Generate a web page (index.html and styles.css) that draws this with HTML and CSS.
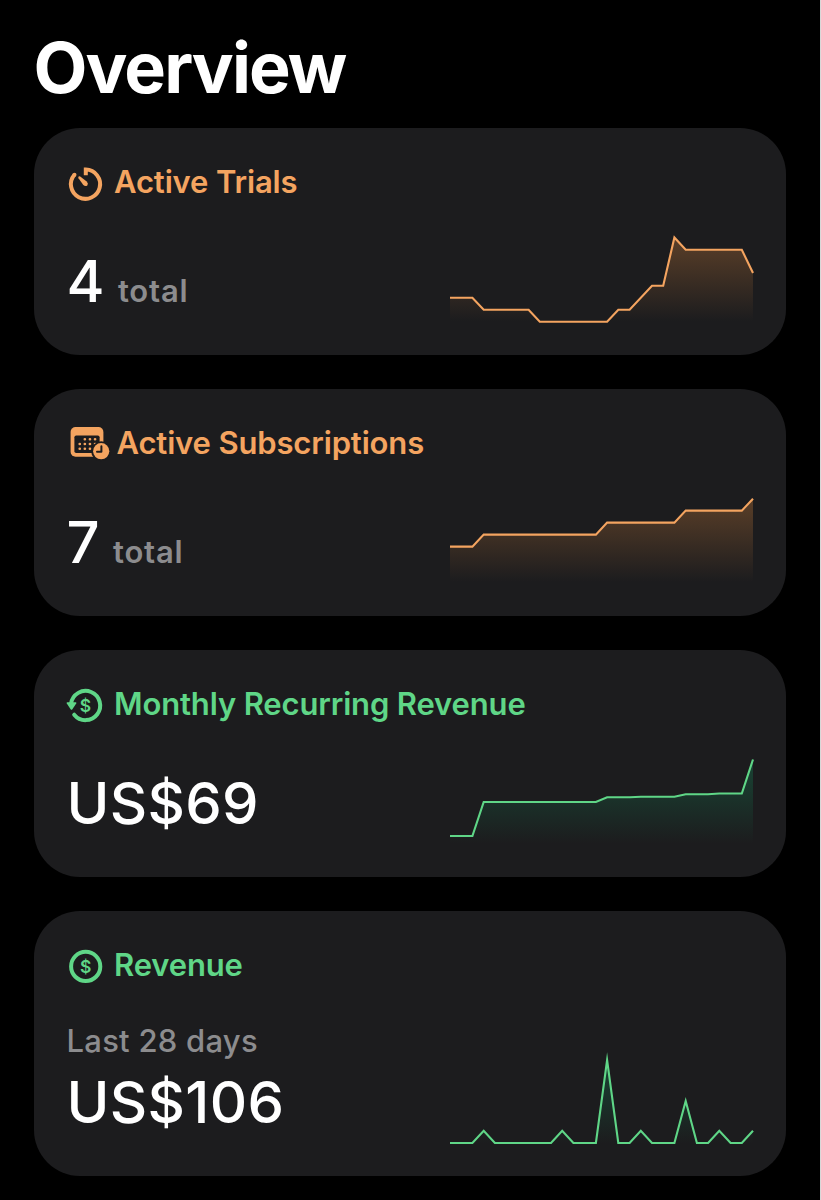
FILE: index.html
```
<!DOCTYPE html>
<html lang="en">

<head>
    <meta charset="UTF-8" />
    <title>Overview</title>
    <link rel="stylesheet" href="styles.css">
</head>

<body>

    <main class="overview">
        <h1>Overview</h1>

        <section class="card orange">
            <h2 class="card-title">
                <svg class="icon" viewBox="0 0 42 36">
                    <path class="ring" d="M18.8 9.2V3.6A14.6 14.6 0 1 1 7.4 8.7" stroke-linecap="butt" />
                    <circle class="fill" cx="7.5" cy="8.7" r="2" />
                    <path class="fill" d="M11.6 10.6Q12.3 10 13.2 10.6L19.7 15.6Q21.8 17.6 20.3 19.4Q18.3 21 16.3 19L11.5 12.2Q11 11.3 11.6 10.6Z" />
                </svg>
                <span>Active Trials</span>
            </h2>
            <div class="card-body">
                <p class="value">4<small>total</small></p>
                <svg class="chart" viewBox="0 0 303 92">
                    <linearGradient id="fade1" gradientUnits="userSpaceOnUse" x1="0" y1="3" x2="0" y2="87">
                        <stop class="fade-top" offset="0" />
                        <stop class="fade-end" offset="1" />
                    </linearGradient>
                    <path fill="url(#fade1)" d="M0 87V63.7H22.4L33.7 75.7H78.6L89.8 87.8H157.1L168.3 75.7H179.6L202 51.8H213.2L224.4 3.5L235.7 15.8H291.8L303 39V87Z" />
                    <polyline class="line" points="0,63.7 22.4,63.7 33.7,75.7 78.6,75.7 89.8,87.8 157.1,87.8 168.3,75.7 179.6,75.7 202,51.8 213.2,51.8 224.4,3.5 235.7,15.8 291.8,15.8 303,39" />
                </svg>
            </div>
        </section>

        <section class="card orange">
            <h2 class="card-title">
                <svg class="icon icon-wide" viewBox="0 0 42 36">
                    <rect class="fill" x="3.6" y="0" width="32.8" height="29.8" rx="5" />
                    <rect class="hole" x="7.4" y="8.4" width="25.2" height="17.6" rx="1.8" />
                    <path class="dots" d="M17.8 12.2h.1M22.9 12.2h.1M28 12.2h.1M12.7 17h.1M17.8 17h.1M22.9 17h.1M28 17h.1M12.7 21.8h.1M17.8 21.8h.1M22.9 21.8h.1" />
                    <circle class="hole" cx="34.2" cy="24.2" r="10" />
                    <circle class="fill" cx="34.2" cy="24.2" r="8.1" />
                    <path class="hand" d="M34.4 19.3V24.8H30" />
                </svg>
                <span>Active Subscriptions</span>
            </h2>
            <div class="card-body">
                <p class="value">7<small>total</small></p>
                <svg class="chart" viewBox="0 0 303 92">
                    <linearGradient id="fade2" gradientUnits="userSpaceOnUse" x1="0" y1="3" x2="0" y2="87">
                        <stop class="fade-top" offset="0" />
                        <stop class="fade-end" offset="1" />
                    </linearGradient>
                    <path fill="url(#fade2)" d="M0 87V51.6H22.4L33.7 39.6H145.9L157.1 27.6H224.4L235.7 15.6H291.8L303 3.7V87Z" />
                    <polyline class="line" points="0,51.6 22.4,51.6 33.7,39.6 145.9,39.6 157.1,27.6 224.4,27.6 235.7,15.6 291.8,15.6 303,3.7" />
                </svg>
            </div>
        </section>

        <section class="card green">
            <h2 class="card-title">
                <svg class="icon" viewBox="0 0 42 36">
                    <path class="ring" d="M4.1 15.5A14.6 14.6 0 1 1 7.2 26.7" stroke-linecap="round" />
                    <path class="fill" d="M.2 14.2H8.8Q9.9 14.4 9.2 15.6L5.4 21.2Q4.5 22.2 3.6 21.2L-.2 15.6Q-.9 14.4 .2 14.2Z" />
                    <text class="dollar" x="18.5" y="23.8">$</text>
                </svg>
                <span>Monthly Recurring Revenue</span>
            </h2>
            <div class="card-body">
                <p class="value">US$69</p>
                <svg class="chart" viewBox="0 0 303 92">
                    <linearGradient id="fade3" gradientUnits="userSpaceOnUse" x1="0" y1="3" x2="0" y2="87">
                        <stop class="fade-top" offset="0" />
                        <stop class="fade-end" offset="1" />
                    </linearGradient>
                    <path fill="url(#fade3)" d="M0 87V80H22.4L33.7 46H145.9L157.1 41.2H180L190.8 40.8H224.4L235.7 38.2H258L269.3 37.5H291.8L303 3.5V87Z" />
                    <polyline class="line" points="0,80 22.4,80 33.7,46 145.9,46 157.1,41.2 180,41.2 190.8,40.8 224.4,40.8 235.7,38.2 258,38.2 269.3,37.5 291.8,37.5 303,3.5" />
                </svg>
            </div>
        </section>

        <section class="card card-tall green">
            <h2 class="card-title">
                <svg class="icon" viewBox="0 0 42 36">
                    <circle class="ring" cx="18.7" cy="17.4" r="14.6" />
                    <text class="dollar" x="18.7" y="23.7">$</text>
                </svg>
                <span>Revenue</span>
            </h2>
            <div class="card-body">
                <div>
                    <p class="period">Last 28 days</p>
                    <p class="value">US$106</p>
                </div>
                <svg class="chart chart-tall" viewBox="0 0 303 97">
                    <linearGradient id="fade4" gradientUnits="userSpaceOnUse" x1="0" y1="9" x2="0" y2="93">
                        <stop class="fade-top" offset="0" />
                        <stop class="fade-end" offset="1" />
                    </linearGradient>
                    <path fill="url(#fade4)" d="M0 93H22.4L33.7 80.7L44.9 93H101L112.2 80.7L123.4 93H145.9L157.1 10L168.3 93H179.6L190.8 80.7L202 93H224.4L235.7 51L246.9 93H258.1L269.3 80.7L280.6 93H291.8L303 80.7V93Z" />
                    <polyline class="line" points="0,93 22.4,93 33.7,80.7 44.9,93 101,93 112.2,80.7 123.4,93 145.9,93 157.1,10 168.3,93 179.6,93 190.8,80.7 202,93 224.4,93 235.7,51 246.9,93 258.1,93 269.3,80.7 280.6,93 291.8,93 303,80.7" />
                </svg>
            </div>
        </section>
    </main>

</body>

</html>
```
FILE: styles.css
```
* {
    box-sizing: border-box;
}

body {
    margin: 0;
    background-color: #000;
    color: #fff;
    font-family: Inter, "Liberation Sans", sans-serif;
}

h1,
h2,
p {
    margin: 0;
}

.overview {
    display: flex;
    flex-direction: column;
    gap: 34px;
    height: 1200px;
    padding: 26px 34px 0 33.5px;
    border-right: 1px solid #d8d8d8;
}

h1 {
    height: 68px;
    font-size: 70px;
    font-weight: 700;
    line-height: 83px;
    letter-spacing: -1.9px;
}

.card {
    display: flex;
    flex-direction: column;
    justify-content: space-between;
    height: 227px;
    padding: 38px 33px 29px;
    border-radius: 46px;
    background-color: #1c1c1e;
}

.card-tall {
    height: 265px;
}

.orange {
    color: #f4a460;
    --fade: #a86a35;
}

.green {
    color: #5fd687;
    --fade: #14784f;
}

.card-title {
    display: flex;
    align-items: center;
    height: 36px;
    font-size: 31px;
    font-weight: 600;
    line-height: 36px;
    letter-spacing: -0.15px;
    white-space: nowrap;
}

.card-title span {
    padding-bottom: 4px;
}

.icon {
    flex: none;
    width: 42px;
    height: 36px;
    margin-right: 5.5px;
    overflow: visible;
}

.icon-wide {
    margin-right: 8px;
}

.ring {
    fill: none;
    stroke: currentColor;
    stroke-width: 4;
}

.fill {
    fill: currentColor;
}

.hole {
    fill: #1c1c1e;
}

.dots {
    fill: none;
    stroke: currentColor;
    stroke-width: 2.6;
    stroke-linecap: round;
}

.hand {
    fill: none;
    stroke: #1c1c1e;
    stroke-width: 2;
    stroke-linejoin: round;
    stroke-linecap: round;
}

.dollar {
    fill: currentColor;
    font-size: 17.5px;
    font-weight: 600;
    letter-spacing: 0;
    text-anchor: middle;
}

.card-body {
    display: flex;
    justify-content: space-between;
    align-items: flex-end;
}

.value {
    padding-bottom: 14.6px;
    color: #fff;
    font-size: 58px;
    font-weight: 500;
    line-height: 60px;
    letter-spacing: 0.3px;
    white-space: nowrap;
}

.value small {
    margin-left: 13px;
    color: #8c8c8e;
    font-size: 31px;
    font-weight: 600;
    line-height: 1;
    letter-spacing: 0.8px;
}

.period {
    margin-bottom: 11px;
    color: #8c8c8e;
    font-size: 31px;
    font-weight: 500;
    line-height: 40px;
    letter-spacing: 0.25px;
}

/* sparklines */
.chart {
    display: block;
    flex: none;
    width: 303px;
    height: 92px;
    overflow: visible;
}

.chart-tall {
    height: 97px;
}

.line {
    fill: none;
    stroke: currentColor;
    stroke-width: 2.1;
    stroke-miterlimit: 10;
}

.fade-top {
    stop-color: var(--fade);
    stop-opacity: 0.45;
}

.fade-end {
    stop-color: var(--fade);
    stop-opacity: 0;
}
```
